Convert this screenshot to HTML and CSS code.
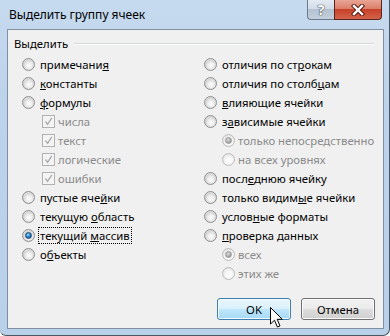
FILE: index.html
```html
<!DOCTYPE html>
<html>
<head>
  <meta charset="utf-8">
  <link rel="stylesheet" href="styles.css">
</head>
<body>
  <div class="window">
    <!-- title bar -->
    <div class="titlebar">
      <span class="title">Выделить группу ячеек</span>
      <div class="caption-buttons">
        <span class="cap-btn help">?</span>
        <span class="cap-btn close">
          <svg width="14" height="12" viewBox="0 0 14 12">
            <path d="M3 2 L11 10 M11 2 L3 10" stroke="#5a1a12" stroke-width="4.4" stroke-linecap="square" fill="none"/>
            <path d="M3 2 L11 10 M11 2 L3 10" stroke="#ffffff" stroke-width="2.4" stroke-linecap="square" fill="none"/>
          </svg>
        </span>
      </div>
    </div>

    <div class="client">
      <div class="group">
        <div class="group-head"><span>Выделить</span><span class="group-line"></span></div>
        <div class="columns">
          <div class="col">
            <div class="opt"><span class="radio"></span><span class="lbl">примечани<u>я</u></span></div>
            <div class="opt"><span class="radio"></span><span class="lbl"><u>к</u>онстанты</span></div>
            <div class="opt"><span class="radio"></span><span class="lbl"><u>ф</u>ормулы</span></div>
            <div class="opt sub off"><span class="check"><svg width="11" height="11" viewBox="0 0 11 11"><path d="M2.5 5.5 L4.6 8.3 L8.8 1.8" stroke="#a9a9a9" stroke-width="1.3" fill="none"/></svg></span><span class="lbl">числа</span></div>
            <div class="opt sub off"><span class="check"><svg width="11" height="11" viewBox="0 0 11 11"><path d="M2.5 5.5 L4.6 8.3 L8.8 1.8" stroke="#a9a9a9" stroke-width="1.3" fill="none"/></svg></span><span class="lbl">текст</span></div>
            <div class="opt sub off"><span class="check"><svg width="11" height="11" viewBox="0 0 11 11"><path d="M2.5 5.5 L4.6 8.3 L8.8 1.8" stroke="#a9a9a9" stroke-width="1.3" fill="none"/></svg></span><span class="lbl">логические</span></div>
            <div class="opt sub off"><span class="check"><svg width="11" height="11" viewBox="0 0 11 11"><path d="M2.5 5.5 L4.6 8.3 L8.8 1.8" stroke="#a9a9a9" stroke-width="1.3" fill="none"/></svg></span><span class="lbl">ошибки</span></div>
            <div class="opt"><span class="radio"></span><span class="lbl">пустые яче<u>й</u>ки</span></div>
            <div class="opt"><span class="radio"></span><span class="lbl">текущую <u>о</u>бласть</span></div>
            <div class="opt"><span class="radio on"></span><span class="lbl focus">текущий <u>м</u>ассив</span></div>
            <div class="opt"><span class="radio"></span><span class="lbl">о<u>б</u>ъекты</span></div>
          </div>
          <div class="col">
            <div class="opt"><span class="radio"></span><span class="lbl">отличия по ст<u>р</u>окам</span></div>
            <div class="opt"><span class="radio"></span><span class="lbl">отличия по столб<u>ц</u>ам</span></div>
            <div class="opt"><span class="radio"></span><span class="lbl"><u>в</u>лияющие ячейки</span></div>
            <div class="opt"><span class="radio"></span><span class="lbl">з<u>а</u>висимые ячейки</span></div>
            <div class="opt sub-r off"><span class="radio on"></span><span class="lbl">только непосредственно</span></div>
            <div class="opt sub-r off"><span class="radio"></span><span class="lbl">на всех уровнях</span></div>
            <div class="opt"><span class="radio"></span><span class="lbl">посл<u>е</u>днюю ячейку</span></div>
            <div class="opt"><span class="radio"></span><span class="lbl">только видим<u>ы</u>е ячейки</span></div>
            <div class="opt"><span class="radio"></span><span class="lbl">услов<u>н</u>ые форматы</span></div>
            <div class="opt"><span class="radio"></span><span class="lbl"><u>п</u>роверка данных</span></div>
            <div class="opt sub-r off"><span class="radio on"></span><span class="lbl">всех</span></div>
            <div class="opt sub-r off"><span class="radio"></span><span class="lbl">этих же</span></div>
          </div>
        </div>
      </div>

      <div class="buttons">
        <button class="btn hover">OK</button>
        <button class="btn">Отмена</button>
      </div>
    </div>

    <!-- mouse pointer over OK -->
    <svg class="cursor" width="14" height="22" viewBox="0 0 14 22">
      <path d="M0.5 0.5 L0.5 17 L4.5 13.2 L7.4 20 L10 18.9 L7.2 12.3 L12.3 12.3 Z" fill="#fff" stroke="#000" stroke-width="1" stroke-linejoin="miter"/>
    </svg>
  </div>
</body>
</html>
```

FILE: styles.css
```css
  body {
    margin: 0;
    font-family: "Noto Sans", "Open Sans", sans-serif;
    font-size: 11.3px;
    color: #000;
  }
  /* the whole window with aero frame */
  .window {
    position: relative;
    width: 390px;
    height: 336px;
    box-sizing: border-box;
    background: linear-gradient(#c6daef, #bdd3eb 30%, #b9d0e9);
    border-right: 1px solid #4b5663;
    border-bottom: 1px solid #4b5663;
    border-bottom-right-radius: 7px;
    border-bottom-left-radius: 6px;
  }

  .titlebar {
    height: 29px;
    display: flex;
    justify-content: space-between;
    padding: 0 7px 0 9px;
  }

  .title {
    padding-top: 7px;
    line-height: 16px;
    font-size: 12px;
  }

  .caption-buttons {
    display: flex;
    height: 20px;
  }

  .cap-btn {
    display: flex;
    align-items: center;
    justify-content: center;
    box-sizing: border-box;
    height: 20px;
  }

  .help {
    width: 27px;
    border: 1px solid #6c7b8c;
    border-top: none;
    border-right: none;
    border-bottom-left-radius: 4px;
    background: linear-gradient(#e3eaf2, #d2dce8 45%, #b5c2d1 50%, #c3cfdc);
    color: #fff;
    font-weight: bold;
    font-size: 14px;
    text-shadow: 0 0 1px #3c4450, 0 0 1px #3c4450, 0 0 1px #3c4450;
  }

  .close {
    width: 48px;
    border: 1px solid #5e2319;
    border-top: none;
    border-bottom-right-radius: 4px;
    background: linear-gradient(#e9a595, #db7f6a 45%, #c8412a 50%, #d2634a);
  }

  .client {
    margin: 0 5px 0 7px;
    height: 300px;
    box-sizing: border-box;
    border: 1px solid #7f90a3;
    background: #f0f0f0;
    display: flex;
    flex-direction: column;
    padding: 6px 8px 8px 6px;
  }

  .group-head {
    display: flex;
    align-items: center;
    line-height: 16px;
    margin-right: 1px;
  }

  .group-line {
    flex: 1;
    margin-left: 6px;
    margin-top: -1px;
    border-top: 1px solid #d5d9dd;
    border-bottom: 1px solid #fff;
  }

  .columns {
    display: grid;
    grid-template-columns: 182px 1fr;
    padding-left: 8px;
    margin-top: 3px;
  }

  .opt {
    display: flex;
    align-items: center;
    height: 19px;
    white-space: nowrap;
  }

  .lbl {
    margin-left: 3px;
    padding: 0 1px;
    border: 1px solid transparent;
    line-height: 15px;
  }

  .lbl.focus {
    border: 1px dotted #000;
  }

  .opt.sub {
    padding-left: 20px;
  }

  .opt.sub-r {
    padding-left: 18px;
  }

  .opt.sub .lbl,
  .opt.sub-r .lbl {
    margin-left: 1px;
  }

  .opt.off .lbl {
    color: #8a8a8a;
  }

  /* win7 style radio */
  .radio {
    position: relative;
    flex: none;
    width: 13px;
    height: 13px;
    box-sizing: border-box;
    border-radius: 50%;
    border: 1px solid #8f8f8f;
    background: radial-gradient(circle at 55% 60%, #fdfdfd 0, #f0f0f0 30%, #d5d5d5 62%, #e9e9e9 80%, #f6f6f6 100%);
  }

  .radio.on::after {
    content: "";
    position: absolute;
    left: 2px;
    top: 2px;
    width: 7px;
    height: 7px;
    box-sizing: border-box;
    border-radius: 50%;
    border: 1px solid #1b4a75;
    background: radial-gradient(circle at 40% 35%, #a8e0ff 0, #3a98dc 35%, #155a98 75%);
  }

  .off .radio {
    border-color: #bcbcbc;
    background: radial-gradient(circle at 55% 60%, #fefefe 0, #f6f6f6 40%, #e6e6e6 70%, #f7f7f7 100%);
  }

  .off .radio.on::after {
    border-color: #9a9a9a;
    background: radial-gradient(circle at 40% 35%, #e0e0e0 0, #b4b4b4 45%, #8e8e8e 85%);
  }

  .check {
    flex: none;
    width: 13px;
    height: 13px;
    box-sizing: border-box;
    border: 1px solid #b1b1b1;
    background: #f4f4f4;
    line-height: 0;
  }

  .buttons {
    margin-top: auto;
    display: flex;
    justify-content: flex-end;
    gap: 10px;
  }

  .btn {
    width: 74px;
    height: 22px;
    padding: 0;
    font-family: "Noto Sans", "Open Sans", sans-serif;
    font-size: 11.3px;
    color: #000;
    border: 1px solid #707070;
    border-radius: 3px;
    background: linear-gradient(#f2f2f2 0, #ebebeb 48%, #dddddd 52%, #cfcfcf 100%);
    box-shadow: inset 0 0 0 1px #fbfbfb;
  }

  .btn.hover {
    border-color: #3c7fb1;
    background: linear-gradient(#eaf6fd 0, #d9f0fc 48%, #bee6fd 52%, #a7d9f5 100%);
    box-shadow: inset 0 0 0 1px #f4fbff;
  }

  .cursor {
    position: absolute;
    left: 270px;
    top: 307px;
  }
```
